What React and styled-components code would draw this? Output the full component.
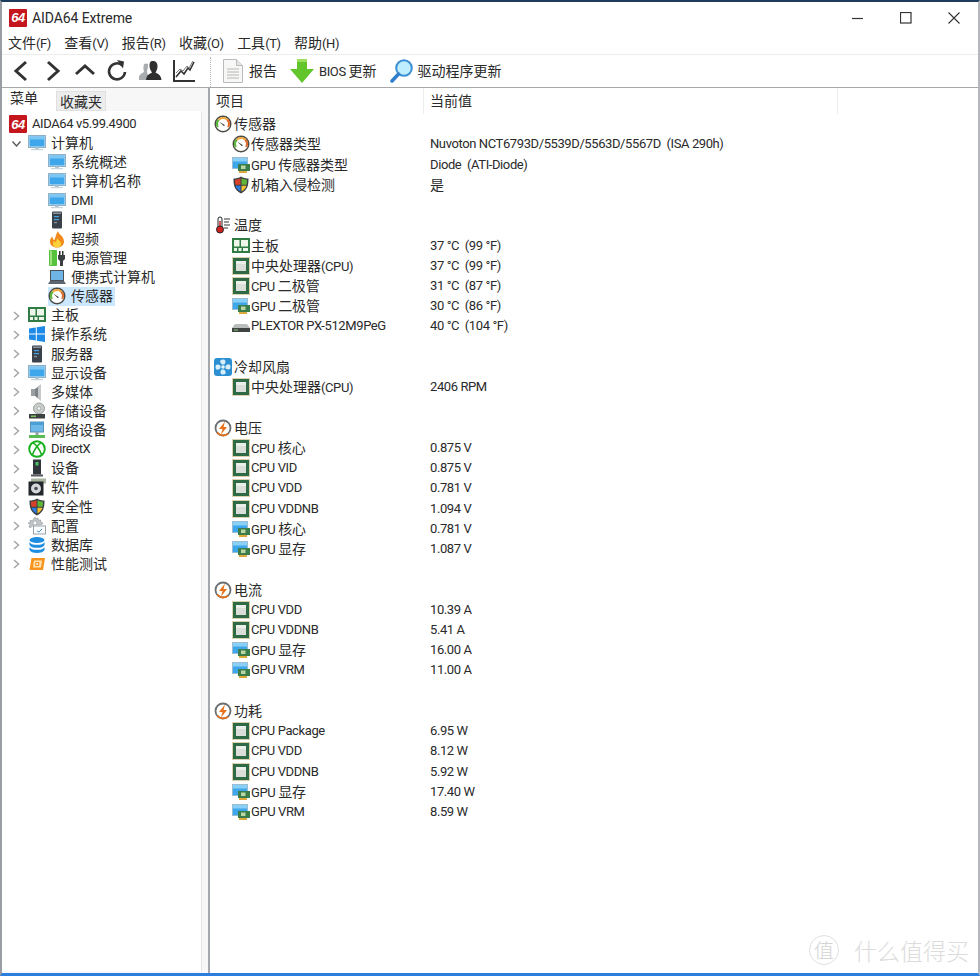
import styled, { createGlobalStyle } from "styled-components";

const GlobalStyle = createGlobalStyle`
  html, body {
    margin: 0;
    padding: 0;
    background: #fff;
  }
  * {
    box-sizing: border-box;
  }
`;

const Svg = styled.svg.attrs((p) => ({
  viewBox: p.$box || "0 0 18 18",
  width: p.$w || 18,
  height: p.$h || 18,
}))`
  display: block;
  flex: none;
`;

/* small 18px pictures used in the tree and the list */
const Monitor = () => (
  <Svg>
    <rect x="0.5" y="1.5" width="17" height="12" fill="#dfeaf2" stroke="#8fb1c8" />
    <rect x="1.5" y="2.5" width="15" height="10" fill="#3ea6ea" />
    <rect x="1.5" y="2.5" width="15" height="3" fill="#7cc6f3" />
    <rect x="7" y="13.5" width="4" height="1.5" fill="#b4c4d0" />
    <rect x="3" y="15" width="12" height="1.2" fill="#c6d4de" />
  </Svg>
);
const Server = () => (
  <Svg>
    <rect x="4" y="0.5" width="10" height="17" rx="1" fill="#39414a" />
    <rect x="5" y="1.5" width="8" height="1.5" fill="#8b949c" />
    <rect x="6" y="5" width="5" height="1.2" fill="#4aa3e0" />
    <rect x="6" y="8" width="5" height="1.2" fill="#4aa3e0" />
    <rect x="6" y="11" width="3" height="1.2" fill="#8b949c" />
  </Svg>
);
const Flame = () => (
  <Svg>
    <path d="M10 1c0 3 6 5 6 10.500 0 4-3.500 6-7 6s-7-2-7-6c0-2.500 1-4 2.500-5 0 2 .5 3 2 3.500C7.500 7 8 4 10 1z" fill="#f08a1c" />
    <path d="M9 8c1 2 4 3 4 6 0 2.500-2 3.500-4 3.500S5 16.500 5 14c0-1.500.5-2.500 1.500-3 .5 1 1 1.200 1.500 1.200C8.500 11 8.500 9.500 9 8z" fill="#fbd23c" />
  </Svg>
);
const PowerIcon = () => (
  <Svg>
    <rect x="1" y="1" width="8" height="16" rx="1" fill="#56c13c" />
    <rect x="2" y="2" width="2" height="14" fill="#9fe07e" />
    <rect x="11" y="2" width="1.500" height="4" fill="#333" />
    <rect x="14" y="2" width="1.500" height="4" fill="#333" />
    <path d="M10 6h7v4l-2 2v5h-3v-5l-2-2z" fill="#3a3f44" />
  </Svg>
);
const Laptop = () => (
  <Svg>
    <rect x="2.500" y="2.500" width="13" height="10" fill="#6fb4e4" stroke="#4a5058" />
    <path d="M2 13h14l2 3H0z" fill="#5b6670" />
  </Svg>
);
const Gauge = () => (
  <Svg>
    <circle cx="9" cy="9" r="8.500" fill="#4a4a42" />
    <circle cx="9" cy="9" r="7" fill="#fff" />
    <path d="M3 12.500A7 7 0 0 1 4 4l1.500 1.500a5 5 0 0 0-.7 6z" fill="#59b83a" />
    <path d="M4 4a7 7 0 0 1 10 0l-1.500 1.500a5 5 0 0 0-7 0z" fill="#f3a63a" />
    <path d="M14 4a7 7 0 0 1 1 8.500l-1.800-1a5 5 0 0 0-.7-6z" fill="#e26a2a" />
    <path d="M5 6.500l6 3.800-1.200.8z" fill="#333" />
  </Svg>
);
const Board = () => (
  <Svg>
    <rect x="0" y="1" width="18" height="15" fill="#2f7d45" />
    <rect x="2" y="3" width="5.500" height="6.500" fill="#eef6ea" />
    <rect x="9" y="3" width="7" height="6.500" fill="#eef6ea" />
    <rect x="2" y="11" width="3" height="3" fill="#eef6ea" />
    <rect x="6.500" y="11" width="3" height="3" fill="#eef6ea" />
    <rect x="11" y="11" width="5" height="3" fill="#eef6ea" />
  </Svg>
);
const Windows = () => (
  <Svg>
    <path d="M1 3.500l6.800-1v6H1zM8.800 2.300L17 1v7.500H8.800zM1 9.500h6.800v6l-6.800-1zM8.800 9.500H17V17l-8.200-1.200z" fill="#1c8ae6" />
  </Svg>
);
const Speaker = () => (
  <Svg>
    <rect x="3" y="6" width="4" height="7" fill="#9a9fa3" />
    <path d="M7 6l6-4.500v16L7 13z" fill="#7c8287" />
    <path d="M10 4l3-2.500v16L10 15z" fill="#c5c9cc" />
  </Svg>
);
const Disk = () => (
  <Svg>
    <circle cx="11" cy="6.500" r="5.500" fill="#c9cdca" stroke="#9aa09c" />
    <circle cx="11" cy="6.500" r="1.800" fill="#f1f3f1" stroke="#8f9490" strokeWidth="0.600" />
    <path d="M1 12h16v4.500H1z" fill="#3d4140" />
    <rect x="3" y="13.500" width="5" height="1.500" fill="#7cc35a" />
  </Svg>
);
const Network = () => (
  <Svg>
    <rect x="2.500" y="1" width="13" height="10" fill="#6fb9ea" stroke="#5b8fb3" />
    <rect x="2.500" y="1" width="13" height="3" fill="#4a9fd6" />
    <rect x="7.500" y="11" width="3" height="3" fill="#8fa3ae" />
    <rect x="1" y="14" width="16" height="3" fill="#59bc52" />
  </Svg>
);
const Xbox = () => (
  <Svg>
    <circle cx="9" cy="9" r="7.800" fill="#fff" stroke="#17b01c" strokeWidth="1.900" />
    <path d="M5 3c2 .5 6 5 8.500 11.500M13 3c-2 .5-6 5-8.500 11.500" fill="none" stroke="#17b01c" strokeWidth="1.600" />
  </Svg>
);
const DeviceIcon = () => (
  <Svg>
    <rect x="5" y="0.500" width="8" height="15" fill="#30353a" />
    <rect x="7.500" y="3" width="3" height="3.500" fill="#4cc168" />
    <rect x="3" y="15.500" width="12" height="2" fill="#55595d" />
  </Svg>
);
const SoftwareIcon = () => (
  <Svg>
    <rect x="3" y="0.500" width="15" height="5" fill="#a9b49f" />
    <rect x="0.500" y="3.500" width="15" height="14" fill="#23262a" />
    <circle cx="8" cy="10.500" r="5" fill="#d5d8db" />
    <circle cx="8" cy="10.500" r="1.800" fill="#4a4e52" />
  </Svg>
);
const Shield = () => (
  <Svg>
    <path d="M9 0.500c2 1.500 5 2 7.500 2 0 6-.5 11.500-7.500 15C2 14 1.500 8.500 1.500 2.500c2.500 0 5.500-.5 7.500-2z" fill="#3a3e44" />
    <path d="M8.500 2.300C7 3.200 5 3.500 3 3.700c0 1.800.1 3.600.4 5.100h5.100z" fill="#d9402a" />
    <path d="M9.500 2.300c1.500.9 3.500 1.200 5.500 1.400 0 1.800-.1 3.600-.4 5.100H9.500z" fill="#5fb536" />
    <path d="M3.600 9.800h4.900v5.700c-2.800-1.500-4.200-3.400-4.900-5.700z" fill="#2a7de0" />
    <path d="M9.500 9.800h4.900c-.7 2.300-2.100 4.200-4.900 5.700z" fill="#f5c12e" />
  </Svg>
);
const Config = () => (
  <Svg>
    <path d="M7 0l1 2 2-1 .5 2.200 2.300-.2-.3 2.200 2.500.8-1.500 1.800H6l-4 3.200-1-2 1.500-1.700L0 6l2.300-.5-.2-2.300 2.300.6z" fill="#c2c6c9" stroke="#8d9296" strokeWidth="0.600" />
    <circle cx="7" cy="6" r="2" fill="#fff" stroke="#8d9296" strokeWidth="0.600" />
    <rect x="5.500" y="9" width="12" height="8" fill="#fafcfd" stroke="#9aa3aa" />
    <path d="M9 14l2 1 3-3" fill="none" stroke="#3f9ad8" />
  </Svg>
);
const DatabaseIcon = () => (
  <Svg>
    <ellipse cx="9" cy="4" rx="7.500" ry="3" fill="#1f8ee0" />
    <path d="M1.500 6c1 2 3.500 2.800 7.500 2.800S15.500 8 16.500 6v3c-1 2-3.500 2.800-7.500 2.800S2.500 11 1.500 9z" fill="#1f8ee0" />
    <path d="M1.500 11c1 2 3.500 2.800 7.500 2.800s6.500-.8 7.500-2.800v3c-1 2-3.500 3-7.500 3s-6.500-1-7.500-3z" fill="#1f8ee0" />
  </Svg>
);
const Bench = () => (
  <Svg>
    <path d="M3.500 3H17l-2 12H1.500z" fill="#f7941d" />
    <path d="M6 5.500h8L13 12.500H5z" fill="#ffe3b0" />
    <path d="M7.500 7h4L11 11H7z" fill="#f7941d" />
    <path d="M8.500 8.300h1.800L10 9.800H8.300z" fill="#fff" />
  </Svg>
);
const Thermometer = () => (
  <Svg>
    <rect x="4" y="1" width="4" height="11" rx="2" fill="#fff" stroke="#222" />
    <rect x="5.300" y="5" width="1.500" height="8" fill="#d02020" />
    <circle cx="6" cy="13.500" r="3.500" fill="#d02020" stroke="#222" />
    <path d="M10 3h6M10 6h5M10 9h6M10 12h4" stroke="#333" strokeWidth="1" />
  </Svg>
);
const Fan = () => (
  <Svg>
    <rect x="0" y="0" width="18" height="18" rx="3" fill="#2b8fd1" />
    <circle cx="9" cy="9" r="1.800" fill="#e6f4fc" />
    <path d="M8 6.500C6 5 5 1.500 9 1.500c3 0 3 2.500 1.500 5zM11.500 8C13 6 16.500 5 16.500 9c0 3-2.500 3-5 1.500zM10 11.500c2 1.500 3 5-1 5-3 0-3-2.500-1.500-5zM6.500 10C5 12 1.500 13 1.500 9c0-3 2.500-3 5-1.500z" fill="#d8eefa" />
  </Svg>
);
const Bolt = () => (
  <Svg>
    <circle cx="9" cy="9" r="7.500" fill="#fff" stroke="#6b6f72" strokeWidth="1.800" />
    <path d="M3.300 13.500A7.500 7.500 0 0 0 14 14.600" fill="none" stroke="#e8711a" strokeWidth="1.800" />
    <path d="M11 2.500L5 10h3.500L7 15.500 13 8H9.500z" fill="#e8711a" />
  </Svg>
);
const Cpu = () => (
  <Svg>
    <rect x="0.500" y="0.500" width="17" height="17" fill="none" stroke="#b7a55a" strokeDasharray="1 1" />
    <rect x="1" y="1" width="16" height="16" fill="#2f6a47" />
    <rect x="4" y="4" width="10" height="10" fill="#dcdfd9" />
    <rect x="4" y="4" width="10" height="3" fill="#eceee9" />
  </Svg>
);
const Gpu = () => (
  <Svg>
    <rect x="0.500" y="1.500" width="15" height="11" fill="#3ea6ea" stroke="#9bbdd2" />
    <rect x="1" y="2" width="14" height="3.500" fill="#8ad0f6" />
    <rect x="6" y="8" width="12" height="7" fill="#3b7d4a" />
    <rect x="9" y="9.500" width="4.500" height="3.500" fill="#b9d6a4" />
    <rect x="7" y="15" width="8" height="2" fill="#e0a83a" />
  </Svg>
);
const Ssd = () => (
  <Svg>
    <path d="M3 7h12l3 4H0z" fill="#b9bdbb" />
    <rect x="0" y="11" width="18" height="4" fill="#3f4442" />
    <rect x="2" y="12.500" width="4" height="1" fill="#8fc87a" />
  </Svg>
);

const Logo64 = styled.span`
  display: flex;
  flex: none;
  align-items: center;
  justify-content: center;
  width: 18px;
  height: 18px;
  background: #c5161d;
  border-radius: 1px;
  color: #fff;
  font: italic bold 13px "Liberation Sans", sans-serif;
  letter-spacing: -0.5px;
`;

const ICONS = {
  logo: () => <Logo64>64</Logo64>,
  monitor: Monitor,
  server: Server,
  flame: Flame,
  power: PowerIcon,
  laptop: Laptop,
  gauge: Gauge,
  board: Board,
  windows: Windows,
  speaker: Speaker,
  disk: Disk,
  network: Network,
  xbox: Xbox,
  device: DeviceIcon,
  software: SoftwareIcon,
  shield: Shield,
  config: Config,
  database: DatabaseIcon,
  bench: Bench,
  thermo: Thermometer,
  fan: Fan,
  bolt: Bolt,
  cpu: Cpu,
  gpu: Gpu,
  ssd: Ssd,
};

const MENUS = ["文件(F)", "查看(V)", "报告(R)", "收藏(O)", "工具(T)", "帮助(H)"];

const TREE = [
  { level: 0, icon: "logo", text: "AIDA64 v5.99.4900" },
  { level: 1, icon: "monitor", text: "计算机", arrow: "open" },
  { level: 2, icon: "monitor", text: "系统概述" },
  { level: 2, icon: "monitor", text: "计算机名称" },
  { level: 2, icon: "monitor", text: "DMI" },
  { level: 2, icon: "server", text: "IPMI" },
  { level: 2, icon: "flame", text: "超频" },
  { level: 2, icon: "power", text: "电源管理" },
  { level: 2, icon: "laptop", text: "便携式计算机" },
  { level: 2, icon: "gauge", text: "传感器", selected: true },
  { level: 1, icon: "board", text: "主板", arrow: "closed" },
  { level: 1, icon: "windows", text: "操作系统", arrow: "closed" },
  { level: 1, icon: "server", text: "服务器", arrow: "closed" },
  { level: 1, icon: "monitor", text: "显示设备", arrow: "closed" },
  { level: 1, icon: "speaker", text: "多媒体", arrow: "closed" },
  { level: 1, icon: "disk", text: "存储设备", arrow: "closed" },
  { level: 1, icon: "network", text: "网络设备", arrow: "closed" },
  { level: 1, icon: "xbox", text: "DirectX", arrow: "closed" },
  { level: 1, icon: "device", text: "设备", arrow: "closed" },
  { level: 1, icon: "software", text: "软件", arrow: "closed" },
  { level: 1, icon: "shield", text: "安全性", arrow: "closed" },
  { level: 1, icon: "config", text: "配置", arrow: "closed" },
  { level: 1, icon: "database", text: "数据库", arrow: "closed" },
  { level: 1, icon: "bench", text: "性能测试", arrow: "closed" },
];

const GROUPS = [
  {
    icon: "gauge",
    title: "传感器",
    rows: [
      ["gauge", "传感器类型", "Nuvoton NCT6793D/5539D/5563D/5567D  (ISA 290h)"],
      ["gpu", "GPU 传感器类型", "Diode  (ATI-Diode)"],
      ["shield", "机箱入侵检测", "是"],
    ],
  },
  {
    icon: "thermo",
    title: "温度",
    rows: [
      ["board", "主板", "37 °C  (99 °F)"],
      ["cpu", "中央处理器(CPU)", "37 °C  (99 °F)"],
      ["cpu", "CPU 二极管", "31 °C  (87 °F)"],
      ["gpu", "GPU 二极管", "30 °C  (86 °F)"],
      ["ssd", "PLEXTOR PX-512M9PeG", "40 °C  (104 °F)"],
    ],
  },
  {
    icon: "fan",
    title: "冷却风扇",
    rows: [["cpu", "中央处理器(CPU)", "2406 RPM"]],
  },
  {
    icon: "bolt",
    title: "电压",
    rows: [
      ["cpu", "CPU 核心", "0.875 V"],
      ["cpu", "CPU VID", "0.875 V"],
      ["cpu", "CPU VDD", "0.781 V"],
      ["cpu", "CPU VDDNB", "1.094 V"],
      ["gpu", "GPU 核心", "0.781 V"],
      ["gpu", "GPU 显存", "1.087 V"],
    ],
  },
  {
    icon: "bolt",
    title: "电流",
    rows: [
      ["cpu", "CPU VDD", "10.39 A"],
      ["cpu", "CPU VDDNB", "5.41 A"],
      ["gpu", "GPU 显存", "16.00 A"],
      ["gpu", "GPU VRM", "11.00 A"],
    ],
  },
  {
    icon: "bolt",
    title: "功耗",
    rows: [
      ["cpu", "CPU Package", "6.95 W"],
      ["cpu", "CPU VDD", "8.12 W"],
      ["cpu", "CPU VDDNB", "5.92 W"],
      ["gpu", "GPU 显存", "17.40 W"],
      ["gpu", "GPU VRM", "8.59 W"],
    ],
  },
];

// the original draws Chinese larger than the narrow Latin text, so runs get their own span
function Mixed({ children }) {
  return children
    .split(/([\u3000-\u9fff]+)/)
    .filter(Boolean)
    .map((run, i) =>
      /[\u3000-\u9fff]/.test(run) ? <Cjk key={i}>{run}</Cjk> : <span key={i}>{run}</span>
    );
}

function App() {
  return (
    <Page>
      <GlobalStyle />
      <TitleBar>
        <Logo64>64</Logo64>
        <TitleText>AIDA64 Extreme</TitleText>
        <WindowButtons>
          <WindowButton>
            <Svg $w={12} $h={12} $box="0 0 12 12">
              <path d="M0 6.500h11" stroke="#333" strokeWidth="1.200" />
            </Svg>
          </WindowButton>
          <WindowButton>
            <Svg $w={12} $h={12} $box="0 0 12 12">
              <rect x="0.500" y="0.500" width="10.500" height="10.500" fill="none" stroke="#333" strokeWidth="1.200" />
            </Svg>
          </WindowButton>
          <WindowButton>
            <Svg $w={12} $h={12} $box="0 0 12 12">
              <path d="M0.500 0.500l11 11M11.500 0.500l-11 11" stroke="#333" strokeWidth="1.100" />
            </Svg>
          </WindowButton>
        </WindowButtons>
      </TitleBar>
      <MenuBar>
        {MENUS.map((m) => (
          <MenuItem key={m}>
            <Mixed>{m}</Mixed>
          </MenuItem>
        ))}
      </MenuBar>
      <Toolbar>
        <NavIcons>
          <Svg $w={22} $h={24} $box="0 0 22 24">
            <path d="M16 3L6 12l10 9" fill="none" stroke="#333" strokeWidth="3" />
          </Svg>
          <Svg $w={22} $h={24} $box="0 0 22 24">
            <path d="M6 3l10 9-10 9" fill="none" stroke="#333" strokeWidth="3" />
          </Svg>
          <Svg $w={22} $h={24} $box="0 0 22 24">
            <path d="M2 15l9-8 9 8" fill="none" stroke="#333" strokeWidth="3" />
          </Svg>
          <Svg $w={22} $h={24} $box="0 0 22 24">
            <path d="M16.500 6.500A8 8 0 1 0 19 13" fill="none" stroke="#333" strokeWidth="2.600" />
            <path d="M11 1l7 1.500-1 7z" fill="#333" />
          </Svg>
          <Svg $w={24} $h={24} $box="0 0 24 24">
            <path d="M6 5a4 4 0 0 1 4 0c.5 3-1 7-1 8l2 6v2H1v-3c0-2 3-4 5-5-.5-2-1-5 0-8z" fill="#a8acaf" />
            <path d="M15 2c3 0 4.500 2 4.500 5s-1 5-2 6.500c2 1.500 5.500 2 6 7.500H8c.5-5.500 4-6 6-7.500-1-1.500-2.500-3.500-2.500-6.500S12 2 15 2z" fill="#2f2f2f" />
          </Svg>
          <Svg $w={24} $h={24} $box="0 0 24 24">
            <path d="M2 1v21h21" fill="none" stroke="#333" strokeWidth="2" />
            <path d="M4 18l5-6 3 3 4-6 2 2 4-8" fill="none" stroke="#333" strokeWidth="1.600" />
            <path d="M4 14l4-4 3 2 4-5 2 2 4-7" fill="none" stroke="#777" strokeWidth="1" />
          </Svg>
        </NavIcons>
        <ToolSeparator />
        <ToolButton>
          <Svg $w={22} $h={26} $box="0 0 22 26">
            <path d="M1.500 1.500h13l6 6v17h-19z" fill="#f7f7f5" stroke="#b9bcbc" />
            <path d="M14.500 1.500v6h6" fill="#e4e5e4" stroke="#b9bcbc" />
            <path d="M5 11h12M5 14h12M5 17h12M5 20h12" stroke="#b5b7b6" />
          </Svg>
          <span>
            <Mixed>报告</Mixed>
          </span>
        </ToolButton>
        <ToolButton>
          <Svg $w={24} $h={24} $box="0 0 24 24">
            <path d="M7 0h10v10h7L12 24 0 10h7z" fill="#62c52b" />
            <path d="M7 0h10v3H7z" fill="#9ae05c" />
          </Svg>
          <span>
            <Mixed>BIOS 更新</Mixed>
          </span>
        </ToolButton>
        <ToolButton>
          <Svg $w={23} $h={24} $box="0 0 23 24">
            <circle cx="14" cy="9" r="7.800" fill="#bfeeff" stroke="#3d8fd6" strokeWidth="2" />
            <path d="M8.500 15L2 22" stroke="#2f7fcb" strokeWidth="3.500" strokeLinecap="round" />
          </Svg>
          <span>
            <Mixed>驱动程序更新</Mixed>
          </span>
        </ToolButton>
      </Toolbar>
      <Main>
        <SidePanel>
          <Tabs>
            <Tab $active>
              <Mixed>菜单</Mixed>
            </Tab>
            <Tab>
              <Mixed>收藏夹</Mixed>
            </Tab>
          </Tabs>
          <Tree>
            {TREE.map((item) => {
              const Icon = ICONS[item.icon];
              return (
                <TreeRow key={item.text} $level={item.level}>
                  {item.arrow && (
                    <Arrow>
                      <Svg $w={9} $h={10} $box="0 0 9 10">
                        {item.arrow === "open" ? (
                          <path d="M0.500 2.500L4.500 7l4-4.500" fill="none" stroke="#555" strokeWidth="1.300" />
                        ) : (
                          <path d="M2 1l4.500 4L2 9" fill="none" stroke="#a6a6a6" strokeWidth="1.500" />
                        )}
                      </Svg>
                    </Arrow>
                  )}
                  <TreeLabel $selected={item.selected}>
                    <Icon />
                    <span>
                      <Mixed>{item.text}</Mixed>
                    </span>
                  </TreeLabel>
                </TreeRow>
              );
            })}
          </Tree>
        </SidePanel>
        <ListPanel>
          <ListHead>
            <HeadCell $w={214}>
              <Mixed>项目</Mixed>
            </HeadCell>
            <HeadCell $w={414}>
              <Mixed>当前值</Mixed>
            </HeadCell>
            <HeadCell />
          </ListHead>
          {GROUPS.map((group) => {
            const GroupIcon = ICONS[group.icon];
            return (
              <Group key={group.title}>
                <GroupRow>
                  <GroupIcon />
                  <span>
                    <Mixed>{group.title}</Mixed>
                  </span>
                </GroupRow>
                {group.rows.map(([icon, name, value]) => {
                  const Icon = ICONS[icon];
                  return (
                    <DataRow key={name}>
                      <NameCell>
                        <Icon />
                        <span>
                          <Mixed>{name}</Mixed>
                        </span>
                      </NameCell>
                      <ValueCell>
                        <Mixed>{value}</Mixed>
                      </ValueCell>
                    </DataRow>
                  );
                })}
              </Group>
            );
          })}
        </ListPanel>
      </Main>
      <Watermark>
        <Seal>值</Seal>
        什么值得买
      </Watermark>
    </Page>
  );
}

const Page = styled.div`
  position: relative;
  display: flex;
  flex-direction: column;
  width: 980px;
  height: 976px;
  overflow: hidden;
  background: #fff;
  border-top: 2px solid #1e3a5c;
  border-left: 2px solid #9a9ea2;
  border-right: 2px solid #b4b8bc;
  border-bottom: 3px solid #2b7de0;
  color: #2a2a2a;
  font: 13px/18px Roboto, "Noto Sans CJK SC", sans-serif;
  letter-spacing: -0.4px;
`;

const Cjk = styled.span`
  font-family: "Noto Sans CJK SC", sans-serif;
  font-size: 14px;
  letter-spacing: 0;
`;

const TitleBar = styled.div`
  display: flex;
  align-items: center;
  height: 31px;
  padding-left: 7px;
`;

const TitleText = styled.div`
  margin-left: 5px;
  font-size: 14px;
  letter-spacing: -0.1px;
`;

const WindowButtons = styled.div`
  display: flex;
  margin-left: auto;
`;

const WindowButton = styled.div`
  display: flex;
  align-items: center;
  justify-content: center;
  width: 48px;
  height: 31px;
`;

const MenuBar = styled.div`
  display: flex;
  align-items: center;
  gap: 13.400px;
  height: 22px;
  padding: 0 0 2px 6px;
  border-bottom: 1px solid #ececec;
`;

const MenuItem = styled.span``;

const Toolbar = styled.div`
  display: flex;
  align-items: center;
  height: 32px;
  padding-left: 8px;
`;

const NavIcons = styled.div`
  display: flex;
  align-items: center;
  gap: 10px;
`;

const ToolSeparator = styled.div`
  align-self: stretch;
  width: 0;
  margin: 2px 11px 0 14px;
  border-left: 1px dotted #b5b5b5;
`;

const ToolButton = styled.div`
  display: flex;
  align-items: center;
  gap: 5px;
  margin-right: 13px;
`;

const Main = styled.div`
  display: flex;
  flex: 1;
  min-height: 0;
  background: #f7f7f7;
  border-top: 1px solid #a8a8a8;
`;

const SidePanel = styled.div`
  display: flex;
  flex-direction: column;
  width: 206px;
`;

const Tabs = styled.div`
  display: flex;
  align-items: flex-end;
  height: 23px;
`;

const Tab = styled.div`
  display: flex;
  align-items: center;
  ${({ $active }) =>
    $active
      ? "width: 54px; height: 23px; padding: 0 0 6px 8px; background: #fff;"
      : "justify-content: center; width: 50px; height: 20px; background: #ececec; border: 1px solid #e0e0e0;"}
`;

const Tree = styled.div`
  flex: 1;
  width: 200px;
  margin-bottom: 2px;
  padding-top: 3.500px;
  background: #fff;
  border-right: 1px solid #e4e4e4;
`;

const TreeRow = styled.div`
  position: relative;
  display: flex;
  align-items: center;
  height: 19.130px;
  padding-left: ${({ $level }) => [7, 26, 46][$level]}px;
`;

const Arrow = styled.span`
  position: absolute;
  left: 10px;
  top: 5px;
`;

const TreeLabel = styled.div`
  display: flex;
  align-items: center;
  gap: 5px;
  height: 19px;
  padding-right: 2px;
  background: ${({ $selected }) => ($selected ? "#cce8ff" : "transparent")};
`;

const ListPanel = styled.div`
  flex: 1;
  padding-left: 0;
  background: #fff;
  border-left: 2px solid #a4a8ac;
`;

const ListHead = styled.div`
  display: flex;
  height: 26px;
`;

const HeadCell = styled.div`
  flex: ${({ $w }) => ($w ? `0 0 ${$w}px` : "1")};
  display: flex;
  align-items: center;
  padding: 0 0 3px 6px;
  border-right: ${({ $w }) => ($w ? "1px solid #eeeeee" : "0")};
`;

const Group = styled.section`
  margin-bottom: 20.235px;
`;

const GroupRow = styled.div`
  display: flex;
  align-items: center;
  gap: 2px;
  height: 20.235px;
  padding-left: 4px;
`;

const DataRow = styled.div`
  display: grid;
  grid-template-columns: 220px 1fr;
  align-items: center;
  height: 20.235px;
`;

const NameCell = styled.div`
  display: flex;
  align-items: center;
  gap: 1px;
  padding-left: 22px;
`;

const ValueCell = styled.div`
  white-space: pre;
`;

const Watermark = styled.div`
  position: absolute;
  right: 9px;
  bottom: 8px;
  display: flex;
  align-items: center;
  gap: 15px;
  color: #dcdcdc;
  font-family: "Noto Sans CJK SC", sans-serif;
  font-size: 23px;
  font-weight: 300;
  letter-spacing: 0;
  line-height: 30px;
`;

const Seal = styled.span`
  display: flex;
  align-items: center;
  justify-content: center;
  width: 30px;
  height: 30px;
  border: 1px solid #e0e0e0;
  border-radius: 50%;
  color: #d4d4d4;
  font-size: 20px;
`;

export default App;
